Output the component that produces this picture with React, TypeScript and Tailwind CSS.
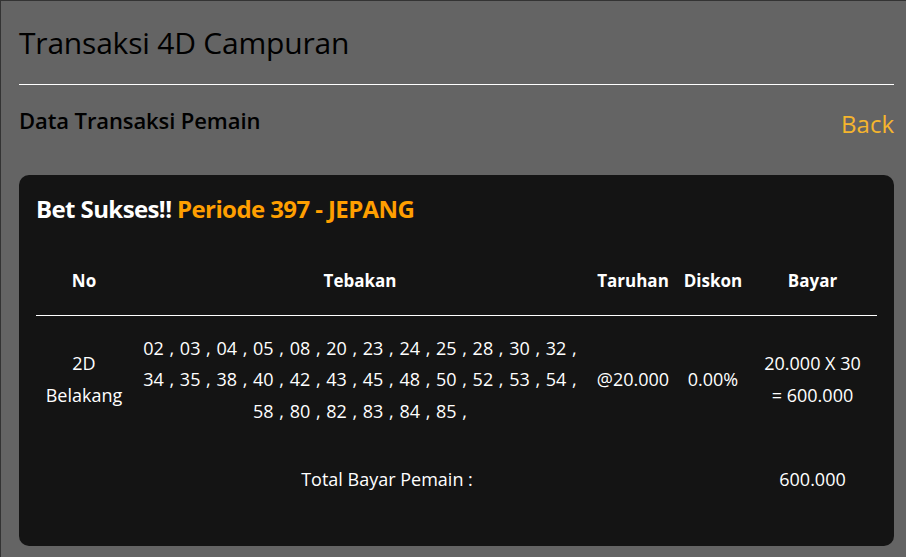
import React from "react";

const numbers = [
  ["02", "03", "04", "05", "08", "20", "23", "24", "25", "28", "30", "32"],
  ["34", "35", "38", "40", "42", "43", "45", "48", "50", "52", "53", "54"],
  ["58", "80", "82", "83", "84", "85"],
];

export default function App() {
  return (
    <div
      className="min-h-[557px] w-[906px] bg-[#646464] border-t border-l border-[#333333] pl-[18px] pr-[12px]"
      style={{ fontFamily: '"Open Sans", "Noto Sans", sans-serif' }}
    >
      <h1 className="pt-[22px] text-[30px] leading-[40px] text-black font-medium tracking-[-0.2px]">
        Transaksi 4D Campuran
      </h1>
      <hr className="mt-[21px] border-0 border-t border-white" />
      <div className="flex justify-between items-start mt-[20px]">
        <h2 className="text-[22px] leading-[30px] font-semibold text-black tracking-[-0.1px]">
          Data Transaksi Pemain
        </h2>
        <a className="mt-[3px] text-[24px] leading-[32px] text-[#f5b52e]">Back</a>
      </div>
      <div className="mt-[35px] bg-[#141414] rounded-[10px] px-[17px] pt-[18px] pb-[55px]">
        <h3 className="text-[24px] leading-[32px] font-bold text-white tracking-[-0.6px]">
          Bet Sukses!! <span className="text-[#ff9f00]">Periode 397 - JEPANG</span>
        </h3>
        <table className="w-full table-fixed mt-[28px] text-white text-[18px] border-collapse">
          <thead>
            <tr className="border-b border-white">
              <th className="w-[96px] h-[62px] text-[17px] font-bold pb-[6px]">No</th>
              <th className="w-[456px] text-[17px] font-bold pb-[6px]">Tebakan</th>
              <th className="w-[90px] text-[17px] font-bold pb-[6px]">Taruhan</th>
              <th className="w-[70px] text-[17px] font-bold pb-[6px]">Diskon</th>
              <th className="text-[17px] font-bold pb-[6px]">Bayar</th>
            </tr>
          </thead>
          <tbody>
            <tr className="leading-[31.5px]">
              <td className="text-center py-[17px]">
                2D
                <br />
                Belakang
              </td>
              <td className="text-center py-[17px] [word-spacing:1px]">
                {numbers.map((line, i) => (
                  <div key={i}>{line.join(" , ") + " ,"}</div>
                ))}
              </td>
              <td className="text-center">@20.000</td>
              <td className="text-center">0.00%</td>
              <td className="text-center">
                20.000 X 30
                <br />= 600.000
              </td>
            </tr>
            <tr className="leading-[24px]">
              <td colSpan={4} className="text-center pt-[23px] pr-[10px]">
                Total Bayar Pemain :
              </td>
              <td className="text-center pt-[23px]">600.000</td>
            </tr>
          </tbody>
        </table>
      </div>
    </div>
  );
}
